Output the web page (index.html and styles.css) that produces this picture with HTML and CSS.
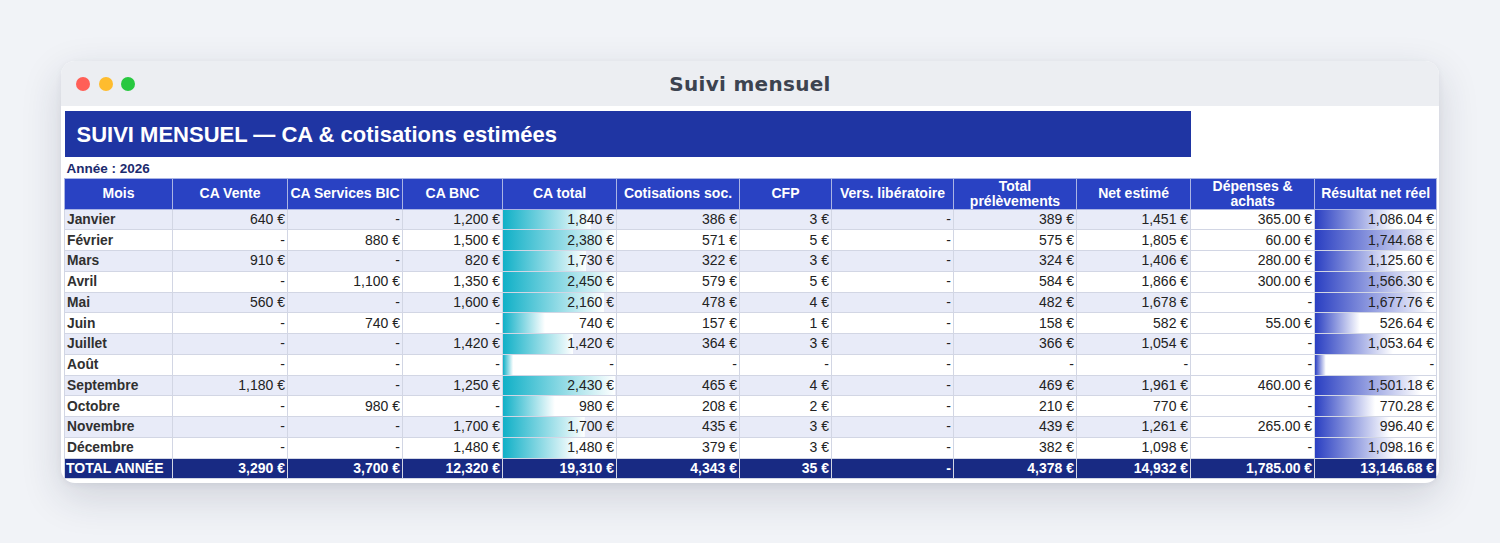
FILE: index.html
```html
<!DOCTYPE html>
<html lang="fr">
<head>
<meta charset="utf-8">
<title>Suivi mensuel</title>
<link rel="stylesheet" href="styles.css">
</head>
<body>
<div class="window">
  <div class="titlebar">
    <div class="lights">
      <span class="light red"></span>
      <span class="light yellow"></span>
      <span class="light green"></span>
    </div>
    <div class="wtitle">Suivi mensuel</div>
  </div>
  <div class="content">
    <table class="sheet">
      <colgroup>
        <col class="c-mois"><col class="c-vente"><col class="c-bic"><col class="c-bnc"><col class="c-total"><col class="c-cot"><col class="c-cfp"><col class="c-vers"><col class="c-prel"><col class="c-net"><col class="c-dep"><col class="c-res">
      </colgroup>
      <tbody>
        <tr class="banner-row">
          <td colspan="10" class="banner">SUIVI MENSUEL — CA &amp; cotisations estimées</td>
          <td colspan="2" class="blank"></td>
        </tr>
        <tr class="year-row">
          <td colspan="12" class="year">Année : 2026</td>
        </tr>
        <tr class="head">
          <th>Mois</th><th>CA Vente</th><th>CA Services BIC</th><th>CA BNC</th><th>CA total</th><th>Cotisations soc.</th><th>CFP</th><th>Vers. libératoire</th><th>Total<br>prélèvements</th><th>Net estimé</th><th>Dépenses &amp;<br>achats</th><th>Résultat net réel</th>
        </tr>
        <tr class="odd"><td class="m">Janvier</td><td>640 €</td><td>-</td><td>1,200 €</td><td class="bar-ca" style="--w:77.6%">1,840 €</td><td>386 €</td><td>3 €</td><td>-</td><td>389 €</td><td>1,451 €</td><td class="w">365.00 €</td><td class="bar-res" style="--w:66%">1,086.04 €</td></tr>
        <tr><td class="m">Février</td><td>-</td><td>880 €</td><td>1,500 €</td><td class="bar-ca" style="--w:97.4%">2,380 €</td><td>571 €</td><td>5 €</td><td>-</td><td>575 €</td><td>1,805 €</td><td class="w">60.00 €</td><td class="bar-res" style="--w:100%">1,744.68 €</td></tr>
        <tr class="odd"><td class="m">Mars</td><td>910 €</td><td>-</td><td>820 €</td><td class="bar-ca" style="--w:73.6%">1,730 €</td><td>322 €</td><td>3 €</td><td>-</td><td>324 €</td><td>1,406 €</td><td class="w">280.00 €</td><td class="bar-res" style="--w:68.1%">1,125.60 €</td></tr>
        <tr><td class="m">Avril</td><td>-</td><td>1,100 €</td><td>1,350 €</td><td class="bar-ca" style="--w:100%">2,450 €</td><td>579 €</td><td>5 €</td><td>-</td><td>584 €</td><td>1,866 €</td><td class="w">300.00 €</td><td class="bar-res" style="--w:90.8%">1,566.30 €</td></tr>
        <tr class="odd"><td class="m">Mai</td><td>560 €</td><td>-</td><td>1,600 €</td><td class="bar-ca" style="--w:89.3%">2,160 €</td><td>478 €</td><td>4 €</td><td>-</td><td>482 €</td><td>1,678 €</td><td class="w">-</td><td class="bar-res" style="--w:96.5%">1,677.76 €</td></tr>
        <tr><td class="m">Juin</td><td>-</td><td>740 €</td><td>-</td><td class="bar-ca" style="--w:37.2%">740 €</td><td>157 €</td><td>1 €</td><td>-</td><td>158 €</td><td>582 €</td><td class="w">55.00 €</td><td class="bar-res" style="--w:37.2%">526.64 €</td></tr>
        <tr class="odd"><td class="m">Juillet</td><td>-</td><td>-</td><td>1,420 €</td><td class="bar-ca" style="--w:62.2%">1,420 €</td><td>364 €</td><td>3 €</td><td>-</td><td>366 €</td><td>1,054 €</td><td class="w">-</td><td class="bar-res" style="--w:64.4%">1,053.64 €</td></tr>
        <tr><td class="m">Août</td><td>-</td><td>-</td><td>-</td><td class="bar-ca" style="--w:9%">-</td><td>-</td><td>-</td><td>-</td><td>-</td><td>-</td><td class="w">-</td><td class="bar-res" style="--w:9%">-</td></tr>
        <tr class="odd"><td class="m">Septembre</td><td>1,180 €</td><td>-</td><td>1,250 €</td><td class="bar-ca" style="--w:99.3%">2,430 €</td><td>465 €</td><td>4 €</td><td>-</td><td>469 €</td><td>1,961 €</td><td class="w">460.00 €</td><td class="bar-res" style="--w:87.4%">1,501.18 €</td></tr>
        <tr><td class="m">Octobre</td><td>-</td><td>980 €</td><td>-</td><td class="bar-ca" style="--w:46%">980 €</td><td>208 €</td><td>2 €</td><td>-</td><td>210 €</td><td>770 €</td><td class="w">-</td><td class="bar-res" style="--w:49.7%">770.28 €</td></tr>
        <tr class="odd"><td class="m">Novembre</td><td>-</td><td>-</td><td>1,700 €</td><td class="bar-ca" style="--w:72.4%">1,700 €</td><td>435 €</td><td>3 €</td><td>-</td><td>439 €</td><td>1,261 €</td><td class="w">265.00 €</td><td class="bar-res" style="--w:61.4%">996.40 €</td></tr>
        <tr><td class="m">Décembre</td><td>-</td><td>-</td><td>1,480 €</td><td class="bar-ca" style="--w:64.4%">1,480 €</td><td>379 €</td><td>3 €</td><td>-</td><td>382 €</td><td>1,098 €</td><td class="w">-</td><td class="bar-res" style="--w:66.6%">1,098.16 €</td></tr>
        <tr class="total"><td class="m">TOTAL ANNÉE</td><td>3,290 €</td><td>3,700 €</td><td>12,320 €</td><td>19,310 €</td><td>4,343 €</td><td>35 €</td><td>-</td><td>4,378 €</td><td>14,932 €</td><td>1,785.00 €</td><td>13,146.68 €</td></tr>
      </tbody>
    </table>
  </div>
</div>
</body>
</html>
```

FILE: styles.css
```css
html, body {
  margin: 0;
  padding: 0;
}
body {
  background: #f1f3f7;
  font-family: "Liberation Sans", Arial, sans-serif;
  width: 1500px;
  height: 543px;
  overflow: hidden;
}
.window {
  margin: 61px 0 0 61px;
  width: 1378px;
  background: #ffffff;
  border-radius: 14px;
  overflow: hidden;
  box-shadow: 0 14px 40px rgba(30, 40, 70, 0.16), 0 2px 6px rgba(30, 40, 70, 0.06);
}
.titlebar {
  height: 45px;
  background: #eceef2;
  display: flex;
  align-items: center;
  position: relative;
}
.lights {
  display: flex;
  gap: 8.5px;
  padding-left: 15px;
}
.light {
  width: 14px;
  height: 14px;
  border-radius: 50%;
  display: block;
}
.red { background: #ff5f57; }
.yellow { background: #febc2e; }
.green { background: #28c840; }
.wtitle {
  position: absolute;
  left: 0;
  right: 0;
  text-align: center;
  font-family: "DejaVu Sans", sans-serif;
  font-weight: bold;
  font-size: 20px;
  color: #3c4350;
  letter-spacing: 0.3px;
}
.content {
  padding: 5px 3px 4px 3px;
}
.sheet {
  border-collapse: collapse;
  table-layout: fixed;
  width: 1372px;
  font-size: 14px;
  color: #222222;
}
.c-mois { width: 108px; }
.c-vente { width: 115px; }
.c-bic { width: 115px; }
.c-bnc { width: 100px; }
.c-total { width: 114px; }
.c-cot { width: 123px; }
.c-cfp { width: 92px; }
.c-vers { width: 122px; }
.c-prel { width: 123px; }
.c-net { width: 114px; }
.c-dep { width: 124px; }
.c-res { width: 122px; }

.banner-row { height: 46px; }
.sheet td.banner {
  background: #1f35a3;
  color: #ffffff;
  font-weight: bold;
  font-size: 22px;
  padding: 0 0 0 12px;
  text-align: left;
  white-space: nowrap;
}
.blank { background: #ffffff; }
.year-row { height: 21px; }
.sheet td.year {
  font-weight: bold;
  font-size: 13.5px;
  color: #1b2a6e;
  padding: 2px 2px 0 2px;
  text-align: left;
  vertical-align: middle;
}
.head { height: 31px; }
.head th {
  background: #2942c3;
  color: #ffffff;
  font-weight: bold;
  font-size: 14px;
  line-height: 15px;
  text-align: center;
  padding: 0;
  border: 1px solid #aab4e4;
  white-space: nowrap;
  overflow: hidden;
}
.sheet tr:not(.banner-row):not(.year-row):not(.head) { height: 20.75px; }
.sheet td {
  padding: 0 2px;
  text-align: right;
  white-space: nowrap;
  line-height: 15px;
  vertical-align: middle;
}
.sheet tr:not(.banner-row):not(.year-row):not(.head) td {
  border: 1px solid #d2d6e4;
}
.sheet tr.odd td { background-color: #e8ebf8; }
.sheet td.m {
  text-align: left;
  font-weight: bold;
  font-size: 13.8px;
  color: #303030;
}
.sheet tr td.w { background-color: #ffffff; }
.sheet td.bar-ca {
  background-image: linear-gradient(to right, #10b0c7, #ffffff);
  background-size: var(--w) 100%;
  background-repeat: no-repeat;
}
.sheet tr td.bar-res {
  background-color: #ffffff;
  background-image: linear-gradient(to right, #2a3fc2, #ffffff);
  background-size: var(--w) 100%;
  background-repeat: no-repeat;
}
.sheet tr.total td {
  background: #182a83;
  color: #ffffff;
  font-weight: bold;
  border: 1px solid #aab4e4;
  border-bottom-color: #182a83;
}
.sheet tr.total td.m { color: #ffffff; padding-left: 1px; font-size: 14px; }
```
